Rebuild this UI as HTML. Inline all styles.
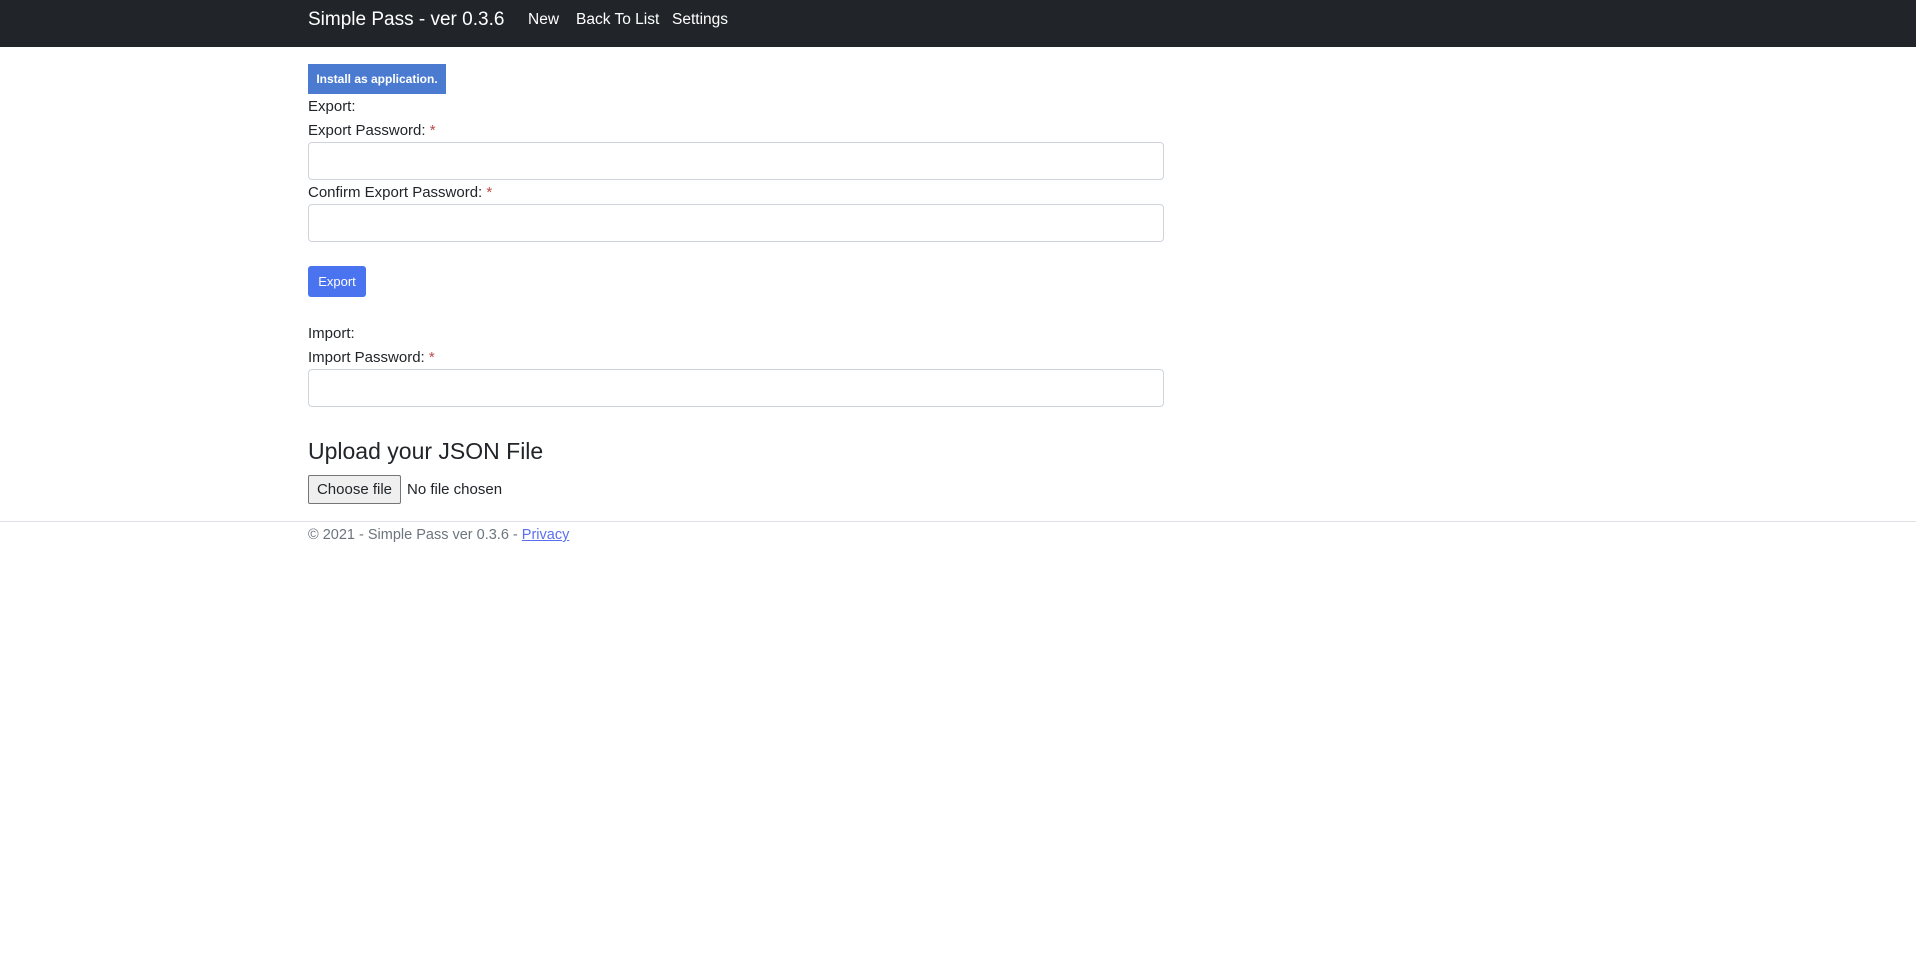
<!DOCTYPE html>
<html><head><meta charset="utf-8"><style>
*{box-sizing:border-box;margin:0;padding:0}
body{width:1916px;height:954px;background:#fff;font-family:"Liberation Sans",sans-serif;font-size:16px;color:#212529;position:relative;overflow:hidden}
.a{position:absolute;white-space:nowrap}
nav{position:absolute;left:0;top:0;width:1916px;height:47px;background:#212529}
.nl{color:#fff;font-size:15.5px;top:11px}
.lbl{font-size:15px;line-height:20px}
.req{color:#b94a48}
.inp{position:absolute;left:308px;width:856px;height:38px;border:1px solid #ced4da;border-radius:4px;background:#fff}
</style></head><body>
<nav>
<div class="a" style="left:308px;top:9px;color:#fff;font-size:19px">Simple Pass - ver 0.3.6</div>
<div class="a nl" style="left:528px">New</div>
<div class="a nl" style="left:576px">Back To List</div>
<div class="a nl" style="left:672px">Settings</div>
</nav>
<div class="a" style="left:308px;top:64px;width:138px;height:30px;background:#4a7bd0;color:#fff;font-weight:bold;font-size:12px;line-height:30px;text-align:center">Install as application.</div>
<div class="a lbl" style="left:308px;top:97px">Export:</div>
<div class="a lbl" style="left:308px;top:121px">Export Password: <span class="req">*</span></div>
<div class="inp" style="top:142px"></div>
<div class="a lbl" style="left:308px;top:183px">Confirm Export Password: <span class="req">*</span></div>
<div class="inp" style="top:204px"></div>
<div class="a" style="left:308px;top:266px;width:58px;height:31px;background:#4a73f0;border-radius:3px;color:#fff;font-size:13px;line-height:31px;text-align:center">Export</div>
<div class="a lbl" style="left:308px;top:324px">Import:</div>
<div class="a lbl" style="left:308px;top:348px">Import Password: <span class="req">*</span></div>
<div class="inp" style="top:369px"></div>
<div class="a" style="left:308px;top:438px;font-size:23px">Upload your JSON File</div>
<div class="a" style="left:308px;top:475px;width:93px;height:29px;background:#efefef;border:1px solid #767676;border-radius:2px;font-size:15px;line-height:27px;text-align:center">Choose file</div>
<div class="a" style="left:407px;top:481px;font-size:15px">No file chosen</div>
<div class="a" style="left:0;top:521px;width:1916px;height:1px;background:#dee2e6"></div>
<div class="a" style="left:308px;top:527px;font-size:14.5px;color:#6c757d">© 2021 - Simple Pass ver 0.3.6 - <span style="color:#5a6ff0;text-decoration:underline">Privacy</span></div>
</body></html>
